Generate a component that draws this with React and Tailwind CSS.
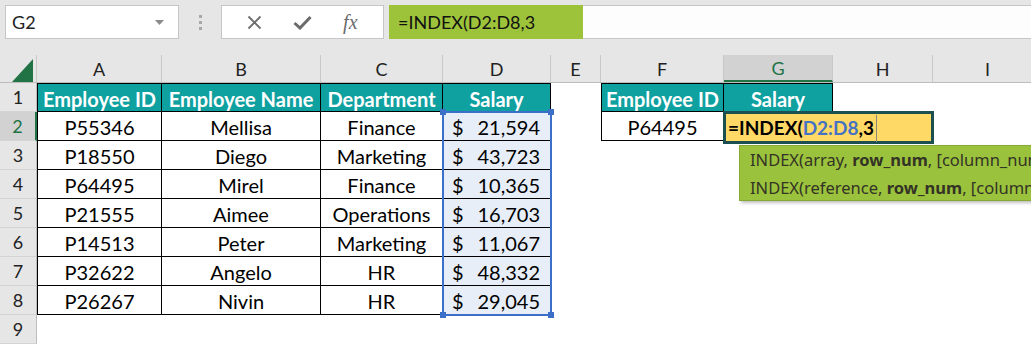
import React from "react";

const cols = [
  { key: "A", w: "w-[125px]" },
  { key: "B", w: "w-[159px]" },
  { key: "C", w: "w-[122px]" },
  { key: "D", w: "w-[108px]" },
  { key: "E", w: "w-[50px]" },
  { key: "F", w: "w-[123px]" },
  { key: "G", w: "w-[109px]" },
  { key: "H", w: "w-[100px]" },
  { key: "I", w: "w-[110px]" },
];

const employees = [
  ["P55346", "Mellisa", "Finance", "21,594"],
  ["P18550", "Diego", "Marketing", "43,723"],
  ["P64495", "Mirel", "Finance", "10,365"],
  ["P21555", "Aimee", "Operations", "16,703"],
  ["P14513", "Peter", "Marketing", "11,067"],
  ["P32622", "Angelo", "HR", "48,332"],
  ["P26267", "Nivin", "HR", "29,045"],
];

const cellFont = { fontFamily: "Lato, 'Open Sans', sans-serif" };

function Cell({ w, className = "", children }) {
  return (
    <div className={`${w} h-[29px] shrink-0 flex items-center justify-center pt-[2px] text-[20px] text-black ${className}`}>
      {children}
    </div>
  );
}

function RowHead({ n, active }) {
  return (
    <div
      className={`w-[37px] h-[29px] shrink-0 flex items-center justify-center pt-[1px] text-[18px] border-b border-[#d4d4d4] ${
        active
          ? "bg-[#d2d2d2] text-[#217346] border-r-2 border-r-[#217346]"
          : "bg-[#e6e6e6] text-[#222] border-r border-r-[#bcbcbc]"
      }`}
    >
      {n}
    </div>
  );
}

function SheetRow({ n, children }) {
  return (
    <div className="flex">
      <RowHead n={n} active={n === 2} />
      {children}
    </div>
  );
}

export default function App() {
  const t = "border-r border-b border-black";
  return (
    <div className="relative w-[1031px] h-[344px] overflow-hidden bg-white" style={cellFont}>
      {/* formula bar */}
      <div className="h-[55px] bg-[#e6e6e6] flex items-start pt-[5px]">
        <div className="ml-[5px] w-[174px] h-[34px] bg-white border border-[#c6c6c6] flex items-center justify-between pl-[6px] pr-[14px]">
          <span className="text-[18px] text-[#222]">G2</span>
          <svg width="9" height="5" viewBox="0 0 9 5">
            <polygon points="0,0 9,0 4.5,5" fill="#8a8a8a" />
          </svg>
        </div>
        <div className="w-[42px] h-[34px] flex flex-col items-center justify-center gap-[3px]">
          <span className="w-[3px] h-[3px] bg-[#a8a8a8]" />
          <span className="w-[3px] h-[3px] bg-[#a8a8a8]" />
          <span className="w-[3px] h-[3px] bg-[#a8a8a8]" />
        </div>
        <div className="flex-1 h-[34px] flex">
          <div className="w-[163px] h-full bg-white border border-[#c6c6c6] flex items-center justify-around px-[10px]">
            <svg width="15" height="15" viewBox="0 0 15 15">
              <path d="M1.5 1.5 L13.5 13.5 M13.5 1.5 L1.5 13.5" stroke="#6b6b6b" strokeWidth="1.8" />
            </svg>
            <svg width="19" height="15" viewBox="0 0 19 15">
              <path d="M1.5 8 L7 13 L17.5 2" stroke="#6b6b6b" strokeWidth="3" fill="none" />
            </svg>
            <span className="text-[20px] italic text-[#6b6b6b]" style={{ fontFamily: "'Liberation Serif', serif" }}>
              fx
            </span>
          </div>
          <div className="w-[5px]" />
          <div className="w-[194px] h-full bg-[#9dc33b] flex items-center pl-[9px] text-[18px] text-[#111]">
            =INDEX(D2:D8,3
          </div>
          <div className="flex-1 h-full bg-[#fdfdfd] border-y border-[#c6c6c6]" />
        </div>
      </div>

      {/* column headers */}
      <div className="flex h-[28px] bg-[#e6e6e6] border-b border-[#bcbcbc]">
        <div className="w-[37px] h-full shrink-0 flex items-end justify-end pr-[3px] border-r border-[#c9c9c9]">
          <svg width="21" height="23" viewBox="0 0 21 23">
            <polygon points="21,0 21,23 0,23" fill="#217346" />
          </svg>
        </div>
        {cols.map((c) => (
          <div
            key={c.key}
            className={`${c.w} h-full shrink-0 flex items-center justify-center pt-[1px] text-[18px] border-r border-[#c9c9c9] ${
              c.key === "G" ? "bg-[#d2d2d2] text-[#217346] border-b-2 border-b-[#217346]" : "text-[#222]"
            }`}
          >
            {c.key}
          </div>
        ))}
      </div>

      {/* row 1 */}
      <SheetRow n={1}>
        <Cell w="w-[125px]" className={`${t} border-t border-l bg-[#0fa0a0] text-white font-bold`}>Employee ID</Cell>
        <Cell w="w-[159px]" className={`${t} border-t bg-[#0fa0a0] text-white font-bold`}>Employee Name</Cell>
        <Cell w="w-[122px]" className={`${t} border-t bg-[#0fa0a0] text-white font-bold`}>Department</Cell>
        <Cell w="w-[108px]" className={`${t} border-t bg-[#0fa0a0] text-white font-bold`}>Salary</Cell>
        <Cell w="w-[50px]" />
        <Cell w="w-[123px]" className={`${t} border-t border-l bg-[#0fa0a0] text-white font-bold`}>Employee ID</Cell>
        <Cell w="w-[109px]" className={`${t} border-t bg-[#0fa0a0] text-white font-bold`}>Salary</Cell>
      </SheetRow>

      {employees.map((e, i) => (
        <SheetRow key={e[0]} n={i + 2}>
          <Cell w="w-[125px]" className={`${t} border-l`}>{e[0]}</Cell>
          <Cell w="w-[159px]" className={t}>{e[1]}</Cell>
          <Cell w="w-[122px]" className={t}>{e[2]}</Cell>
          <Cell w="w-[108px]" className={`${t} bg-[#e8eef8] !justify-between pl-[9px] pr-[10px]`}>
            <span>$</span>
            <span>{e[3]}</span>
          </Cell>
          {i === 0 && (
            <>
              <Cell w="w-[50px]" />
              <Cell w="w-[123px]" className={`${t} border-l`}>P64495</Cell>
              <Cell w="w-[109px]" className={t} />
            </>
          )}
        </SheetRow>
      ))}
      <SheetRow n={9} />

      {/* selection D2:D8 */}
      <div className="absolute left-[442px] top-[111px] w-[110px] h-[205px] border-2 border-[#3b6fc8] pointer-events-none">
        <span className="absolute -left-[4px] -top-[4px] w-[6px] h-[6px] bg-[#3b6fc8]" />
        <span className="absolute -right-[4px] -top-[4px] w-[6px] h-[6px] bg-[#3b6fc8]" />
        <span className="absolute -left-[4px] -bottom-[4px] w-[6px] h-[6px] bg-[#3b6fc8]" />
        <span className="absolute -right-[4px] -bottom-[4px] w-[6px] h-[6px] bg-[#3b6fc8]" />
      </div>

      {/* editing cell G2 */}
      <div className="absolute left-[723px] top-[111px] w-[211px] h-[33px] border-[3px] border-[#1c4f4f] bg-[#ffd966] flex items-center pl-[2px] pt-[1px] text-[19px] font-bold text-black">
        <span>=INDEX(</span>
        <span className="text-[#4472c4]">D2:D8</span>
        <span>,3</span>
        <span className="ml-[2px] w-px h-[27px] bg-[#8a8a7a]" />
      </div>

      {/* function tooltip */}
      <div
        className="absolute left-[739px] top-[145px] w-[320px] h-[56px] bg-[#9bc23c] border border-[#86a834] shadow-[2px_2px_3px_rgba(0,0,0,0.25)] pl-[10px] text-[16.5px] leading-[28px] text-[#333326] whitespace-nowrap"
        style={{ fontFamily: "'Noto Sans', 'Open Sans', sans-serif" }}
      >
        <div>
          INDEX(array, <b>row_num</b>, [column_num])
        </div>
        <div>
          INDEX(reference, <b>row_num</b>, [column_num], [area_num])
        </div>
      </div>
    </div>
  );
}
